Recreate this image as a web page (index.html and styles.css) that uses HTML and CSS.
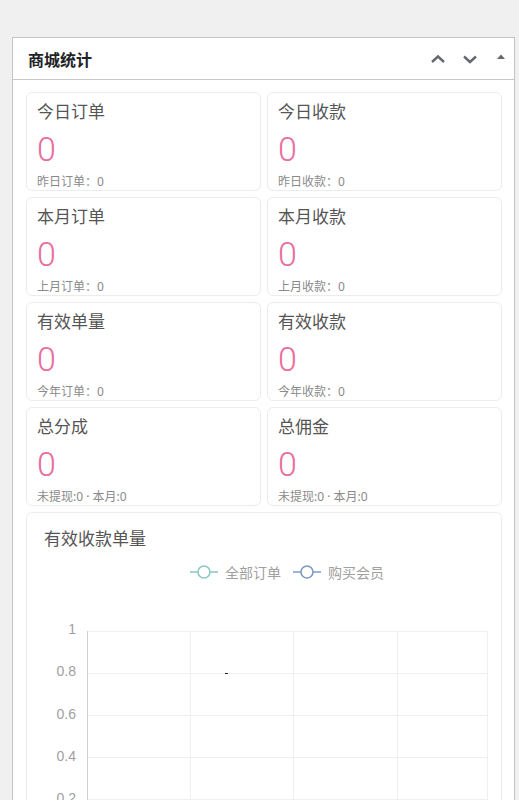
FILE: index.html
```html
<!DOCTYPE html>
<html lang="zh-CN">
<head>
  <meta charset="UTF-8" />
  <title>商城统计</title>
  <link rel="stylesheet" href="styles.css">
</head>
<body>
<div class="postbox">
  <div class="postbox-head">
    <h2>商城统计</h2>
    <div class="handle-actions">
      <svg class="ico" width="20" height="20" viewBox="0 0 20 20"><path d="M4 13 L10 7.5 L16 13" fill="none" stroke="#646970" stroke-width="2.4"/></svg>
      <svg class="ico" width="20" height="20" viewBox="0 0 20 20"><path d="M4 7.5 L10 13 L16 7.5" fill="none" stroke="#646970" stroke-width="2.4"/></svg>
      <svg class="ico tri" width="14" height="20" viewBox="0 0 14 20"><path d="M3 10 L7 5.5 L11 10 Z" fill="#646970"/></svg>
    </div>
  </div>

  <div class="postbox-inside">
    <div class="stat-grid">
      <div class="stat-card">
        <div class="stat-title">今日订单</div>
        <div class="stat-num">0</div>
        <div class="stat-sub">昨日订单：0</div>
      </div>
      <div class="stat-card">
        <div class="stat-title">今日收款</div>
        <div class="stat-num">0</div>
        <div class="stat-sub">昨日收款：0</div>
      </div>
      <div class="stat-card">
        <div class="stat-title">本月订单</div>
        <div class="stat-num">0</div>
        <div class="stat-sub">上月订单：0</div>
      </div>
      <div class="stat-card">
        <div class="stat-title">本月收款</div>
        <div class="stat-num">0</div>
        <div class="stat-sub">上月收款：0</div>
      </div>
      <div class="stat-card">
        <div class="stat-title">有效单量</div>
        <div class="stat-num">0</div>
        <div class="stat-sub">今年订单：0</div>
      </div>
      <div class="stat-card">
        <div class="stat-title">有效收款</div>
        <div class="stat-num">0</div>
        <div class="stat-sub">今年收款：0</div>
      </div>
      <div class="stat-card">
        <div class="stat-title">总分成</div>
        <div class="stat-num">0</div>
        <div class="stat-sub">未提现:0 · 本月:0</div>
      </div>
      <div class="stat-card">
        <div class="stat-title">总佣金</div>
        <div class="stat-num">0</div>
        <div class="stat-sub">未提现:0 · 本月:0</div>
      </div>
    </div>

    <div class="chart-card">
      <div class="chart-title">有效收款单量</div>
      <div class="legend">
        <span class="legend-item">
          <svg width="28" height="14" viewBox="0 0 28 14"><path d="M0 7 H8 M20 7 H28" stroke="#8cc6c0" stroke-width="1.6"/><circle cx="14" cy="7" r="6" fill="#fff" stroke="#8cc6c0" stroke-width="1.6"/></svg>
          全部订单
        </span>
        <span class="legend-item">
          <svg width="28" height="14" viewBox="0 0 28 14"><path d="M0 7 H8 M20 7 H28" stroke="#7b9bc6" stroke-width="1.6"/><circle cx="14" cy="7" r="6" fill="#fff" stroke="#7b9bc6" stroke-width="1.6"/></svg>
          购买会员
        </span>
      </div>
      <svg class="chart" width="474" height="230" viewBox="0 0 474 230">
        <g transform="translate(-27,-600)">
          <g stroke="#efefef" stroke-width="1">
            <path d="M87 632.5 H487 M87 674.5 H487 M87 716.5 H487 M87 758.5 H487 M87 800.5 H487"/>
            <path d="M190.5 632 V820 M293.5 632 V820 M397.5 632 V820 M487.5 632 V820"/>
          </g>
          <path d="M87.5 632 V820" stroke="#cfcfcf" stroke-width="1"/>
          <path d="M225 674.5 H228" stroke="#222" stroke-width="1"/>
          <g class="axis-label" text-anchor="end">
            <text x="76" y="635">1</text>
            <text x="76" y="677">0.8</text>
            <text x="76" y="720">0.6</text>
            <text x="76" y="762">0.4</text>
            <text x="76" y="804">0.2</text>
          </g>
        </g>
      </svg>
    </div>
  </div>
</div>
</body>
</html>
```

FILE: styles.css
```css
body {
  margin: 0;
  padding: 37px 4px 0 12px;
  background: #f0f0f1;
  font-family: "Noto Sans", "Noto Sans CJK SC", sans-serif;
  color: #3c434a;
}
.postbox {
  background: #fff;
  border: 1px solid #c3c4c7;
  border-bottom: none;
}
.postbox-head {
  display: flex;
  align-items: center;
  justify-content: space-between;
  height: 41px;
  border-bottom: 1px solid #c8c8c8;
  padding: 0 6px 0 15px;
}
.postbox-head h2 {
  margin: 0;
  font-size: 16px;
  font-weight: 700;
  color: #1d2327;
  font-family: "Noto Sans CJK SC", sans-serif;
  line-height: 20px;
}
.handle-actions {
  display: flex;
  align-items: center;
  gap: 12px;
}
.ico {
  display: block;
}
.tri {
  margin-left: 2px;
}
.postbox-inside {
  padding: 12px 12px 0 13px;
}
.stat-grid {
  display: grid;
  grid-template-columns: 1fr 1fr;
  gap: 6px;
}
.stat-card {
  border: 1px solid #ececec;
  border-radius: 6px;
  padding: 6px 10px 0;
  box-sizing: border-box;
  height: 99px;
  font-family: "Noto Sans CJK SC", sans-serif;
}
.stat-title {
  font-size: 17px;
  line-height: 24px;
  color: #555;
}
.stat-num {
  font-family: Roboto, "Noto Sans", sans-serif;
  font-weight: 300;
  font-size: 34px;
  line-height: 40px;
  color: #e96d9e;
  margin-top: 6px;
}
.stat-sub {
  font-family: "Noto Sans", "Noto Sans CJK SC", sans-serif;
  font-size: 12px;
  line-height: 16px;
  color: #8a8a8a;
  margin-top: 5px;
}
.chart-card {
  margin-top: 6px;
  border: 1px solid #ececec;
  border-bottom: none;
  border-radius: 6px 6px 0 0;
  padding-top: 13px;
  font-family: "Noto Sans CJK SC", sans-serif;
}
.chart-title {
  font-size: 17px;
  line-height: 24px;
  color: #555;
  padding-left: 17px;
}
.legend {
  display: flex;
  gap: 12px;
  padding: 12px 0 0 163px;
  font-size: 14px;
  line-height: 20px;
  color: #a0a0a0;
}
.legend-item {
  display: flex;
  align-items: center;
  gap: 7px;
}
.legend-item svg {
  display: block;
}
.chart {
  display: block;
  margin-top: 17px;
}
.axis-label {
  font-family: "Liberation Sans", Arial, sans-serif;
  font-size: 14px;
  fill: #a0a0a0;
}
```
